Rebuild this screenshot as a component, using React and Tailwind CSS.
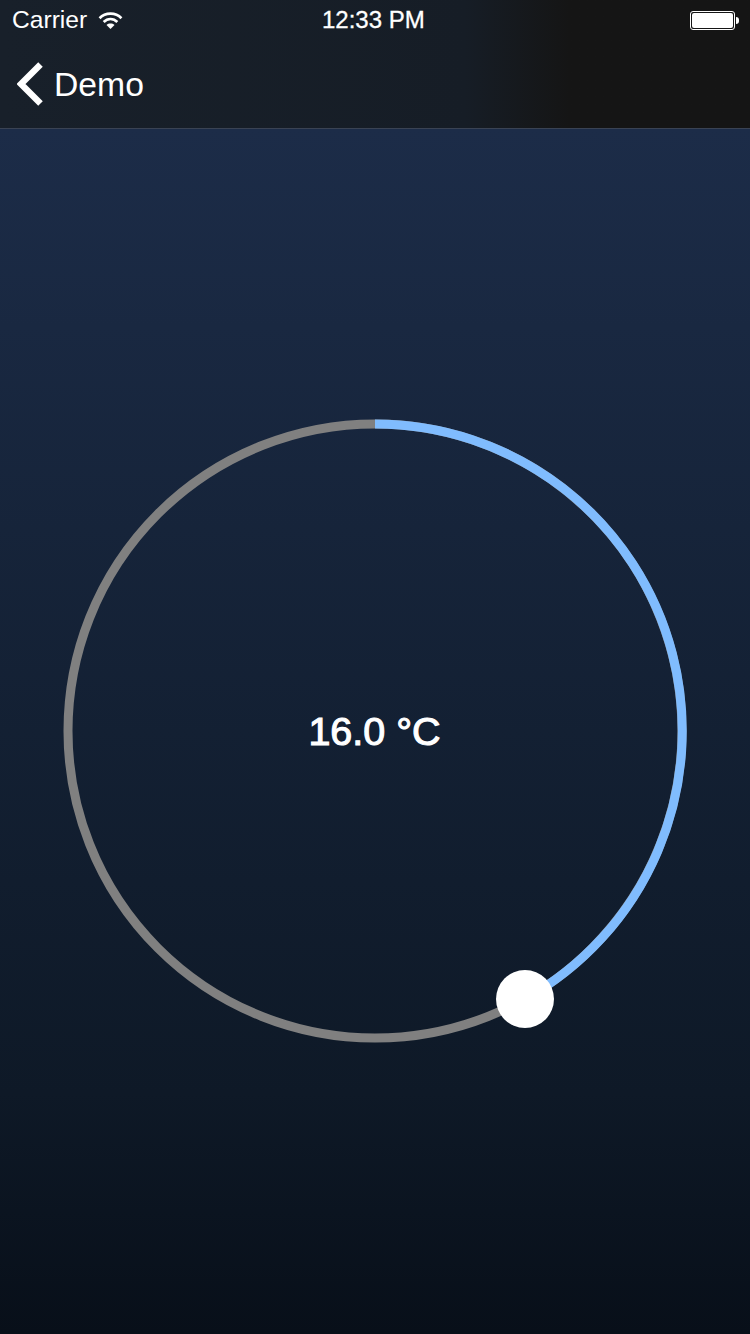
import React from 'react';

const sans = "font-['Liberation_Sans',Arial,sans-serif]";

function Wifi() {
  return (
    <svg width="25" height="19" viewBox="0 0 26 20" fill="none" stroke="white" strokeWidth="2.8">
      <path d="M1.5 7.6C7.6 1.2 18.4 1.2 24.5 7.6" />
      <path d="M5.8 11.6C10 7.4 16 7.4 20.2 11.6" />
      <path d="M13 19L8.8 14.7C11.2 12.6 14.8 12.6 17.2 14.7Z" fill="white" stroke="none" />
    </svg>
  );
}

function Battery() {
  return (
    <div className="flex items-center">
      <div className="w-[45px] h-[19px] rounded-[3px] border border-white p-[1px]">
        <div className="w-full h-full rounded-[2px] bg-white" />
      </div>
      <div className="w-[3px] h-[7px] bg-white rounded-r-sm ml-[1px]" />
    </div>
  );
}

function Dial() {
  return (
    <svg width="632" height="632" viewBox="0 0 632 632">
      <circle cx="316" cy="316" r="307" fill="none" stroke="#808080" strokeWidth="9" />
      <path d="M316 9A307 307 0 0 1 466 584" fill="none" stroke="#80bcfe" strokeWidth="9" />
      <circle cx="466" cy="584" r="29" fill="white" />
    </svg>
  );
}

export default function App() {
  return (
    <div className={`w-[750px] h-[1334px] flex flex-col overflow-hidden text-white ${sans}`}>
      <header className="h-[129px] shrink-0 border-b border-[#3a4354] bg-gradient-to-r from-[#18202a] via-[#161d26] via-[62%] to-[#151515] to-[76%]">
        <div className="h-10 flex items-center justify-between px-3 relative">
          <div className="flex items-center gap-[11px]">
            <span className="text-[24.6px] leading-none">Carrier</span>
            <Wifi />
          </div>
          <span className="absolute left-[322px] top-[8px] text-[24px] leading-none [-webkit-text-stroke:0.3px_white]">12:33 PM</span>
          <div className="pt-px -mr-px">
            <Battery />
          </div>
        </div>
        <div className="flex items-center h-[88px] pl-[17px]">
          <svg width="26" height="44" viewBox="0 0 26 44" fill="none" stroke="white" strokeWidth="6.4">
            <path d="M23.5 2.5L4 22L23.5 41.5" />
          </svg>
          <span className="ml-[11px] mt-[2px] text-[33.7px] leading-none">Demo</span>
        </div>
      </header>
      <main className="flex-1 flex items-center justify-center relative pb-px bg-gradient-to-b from-[#1c2c48] via-[#0e1927] via-80% to-[#080f19]">
        <Dial />
        <span className="absolute pt-[2px] -ml-px text-[39.5px] leading-none [-webkit-text-stroke:1.1px_white]">16.0 °C</span>
      </main>
    </div>
  );
}
